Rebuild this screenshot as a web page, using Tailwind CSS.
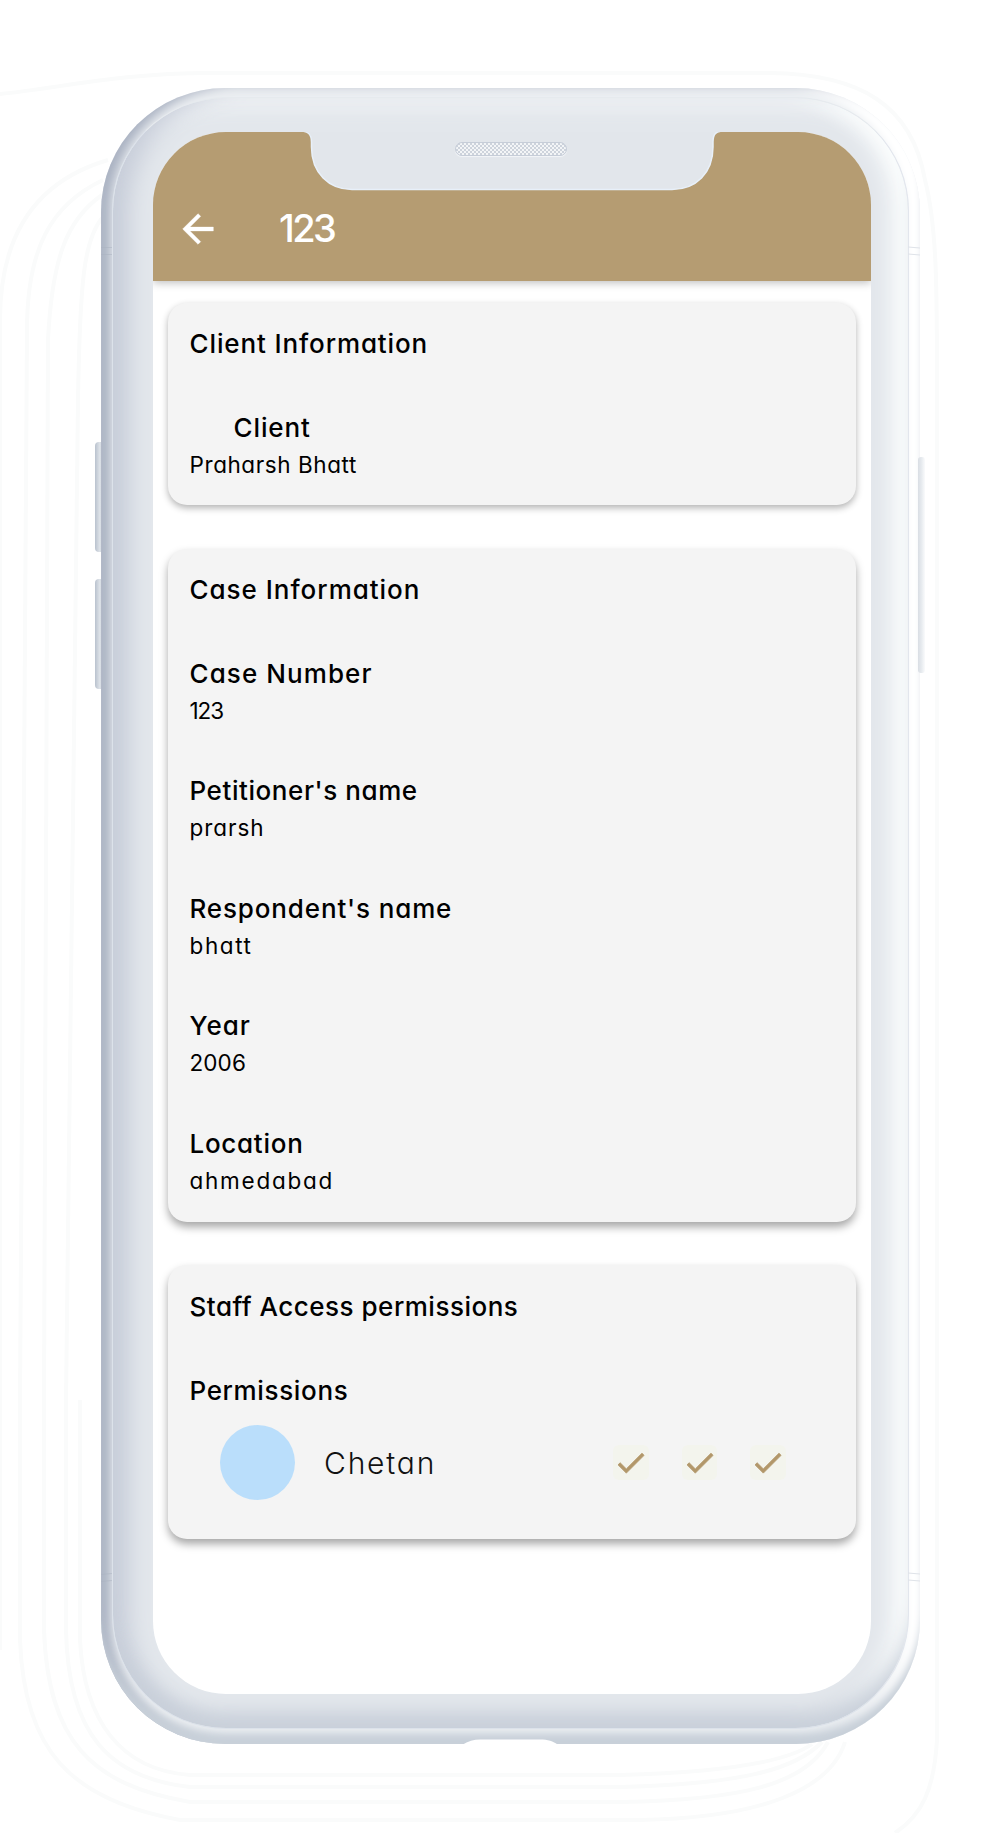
<!DOCTYPE html>
<html lang="en">
<head>
<meta charset="utf-8">
<title>Case details</title>
<script src="https://cdn.jsdelivr.net/npm/@tailwindcss/browser@4"></script>
</head>
<body class="relative h-[1833px] w-[1000px] overflow-hidden bg-white font-['Inter',sans-serif] text-black [font-feature-settings:'cv11']">

<!-- Faint contour lines around the device -->
<svg class="absolute inset-0" width="1000" height="1833" fill="none" stroke="#fafbfb" stroke-width="4">
  <path d="M0 94C60 88 120 73 210 73H770C860 74 912 105 925 180C938 230 937 300 937 420V1740C934 1790 922 1815 895 1833"/>
  <path d="M108 160C40 180 0 230 0 320V1650"/>
  <path d="M103 180C50 205 27 250 27 330L20 1400V1640C24 1750 70 1800 180 1820H640C760 1818 830 1790 845 1742"/>
  <path d="M102 195C66 220 52 260 48 340L44 1400V1630C48 1740 90 1785 190 1802H620C740 1800 805 1785 828 1742"/>
  <path d="M102 218C84 240 80 280 78 400L66 1400V1630C68 1735 110 1778 190 1787H620C740 1784 795 1770 822 1742"/>
  <path d="M80 1400V1640C84 1720 120 1770 190 1775H620C730 1772 790 1760 812 1744"/>
</svg>

<!-- Side buttons -->
<div class="absolute left-[95px] top-[442px] h-[110px] w-[9px] rounded-l-[4px] bg-linear-to-r from-[#b9c2ce] via-[#dce1e7] to-[#cdd3dc]"></div>
<div class="absolute left-[95px] top-[579px] h-[110px] w-[9px] rounded-l-[4px] bg-linear-to-r from-[#b9c2ce] via-[#dce1e7] to-[#cdd3dc]"></div>

<!-- Device frame -->
<div class="absolute left-[101px] top-[88px] h-[1656px] w-[819px] rounded-[124px] bg-[#edf0f3] pb-[15px] pl-[11px] pr-[11px] pt-[9px] shadow-[inset_0_-14px_8px_-3px_#c8d0d9,inset_12px_0_12px_-2px_#a9b1c1,inset_-14px_0_8px_#ffffff]">
  <div class="h-full w-full rounded-[114px] border border-[#dce2ea] border-r-[#e2e6ed] border-t-[#e6eaee] bg-[#e3e7ec] pb-[34px] pl-[40px] pr-[37.5px] pt-[34px] shadow-[inset_0_-24px_18px_-8px_#c9d0da,inset_26px_0_22px_-10px_#c7cdd9,inset_-24px_0_20px_-8px_#fbfdfd,inset_0_20px_16px_-8px_#eef1f4]">

    <!-- Screen -->
    <div class="relative flex h-full w-full flex-col overflow-hidden rounded-[73px] bg-white">
      <header class="relative flex h-[149px] shrink-0 items-start bg-[#b59c72] pl-[22px] pt-[74px] text-white shadow-[0_2px_8px_rgba(0,0,0,0.25)]">
        <svg class="absolute left-[146.500px] top-[-1px]" width="424" height="60" viewBox="0 0 424 60" fill="#e2e6eb" stroke="#e8f0f9" stroke-width="1.5">
          <path d="M0 0C8 0 11.500 3 11.500 11V16C11.500 42 29 58.500 52 58.500H372C396 58.500 413 42 413 16V11C413 3 416 0 424 0Z"/>
        </svg>
        <div class="absolute left-[301.500px] top-[10px] h-[14px] w-[112px] rounded-full border border-[#c6cdd8] bg-[repeating-conic-gradient(#cdd3dc_0_25%,#f3f5f7_0_50%)] bg-[length:4px_4px] shadow-[0_1px_1px_#f4f6f9]"></div>
        <svg class="size-[46px]" viewBox="0 0 24 24" fill="currentColor" stroke="currentColor" stroke-width="0.2"><path d="M20 11H7.830l5.590-5.590L12 4l-8 8 8 8 1.410-1.410L7.830 13H20v-2z"/></svg>
        <h1 class="ml-[58px] h-[46px] text-[38px] font-medium leading-[45px] tracking-[-2.600px]">123</h1>
      </header>

      <main class="flex flex-col px-[14.500px] pt-[22px]">
        <section class="h-[202px] rounded-[19px] bg-[#f4f4f4] pl-[22px] pt-[25px] shadow-[0_3px_7px_rgba(0,0,0,0.3)]">
          <h2 class="text-[26px] font-medium leading-8 tracking-[0.880px]">Client Information</h2>
          <h3 class="ml-[44px] mt-[52px] text-[26px] font-medium leading-8 tracking-[0.900px]">Client</h3>
          <p class="mt-[7px] text-[22.500px] leading-7 tracking-[0.580px]">Praharsh Bhatt</p>
        </section>

        <section class="mt-[43.500px] h-[673px] rounded-[19px] bg-[#f4f4f4] pl-[22px] pt-[25.500px] shadow-[0_5px_9px_rgba(0,0,0,0.35)]">
          <h2 class="text-[26px] font-medium leading-8 tracking-[0.980px]">Case Information</h2>
          <div class="mt-[51.500px] flex flex-col gap-[50.500px]">
            <div>
              <h3 class="text-[26px] font-medium leading-8 tracking-[1.080px]">Case Number</h3>
              <p class="mt-[7px] text-[22.500px] leading-7 tracking-[-1.100px]">123</p>
            </div>
            <div>
              <h3 class="text-[26px] font-medium leading-8 tracking-[0.580px]">Petitioner's name</h3>
              <p class="mt-[7px] text-[22.500px] leading-7 tracking-[0.950px]">prarsh</p>
            </div>
            <div>
              <h3 class="text-[26px] font-medium leading-8 tracking-[0.860px]">Respondent's name</h3>
              <p class="mt-[7px] text-[22.500px] leading-7 tracking-[1.600px]">bhatt</p>
            </div>
            <div>
              <h3 class="text-[26px] font-medium leading-8 tracking-[1.050px]">Year</h3>
              <p class="mt-[7px] text-[22.500px] leading-7 tracking-[0.100px]">2006</p>
            </div>
            <div>
              <h3 class="text-[26px] font-medium leading-8 tracking-[0.720px]">Location</h3>
              <p class="mt-[7px] text-[22.500px] leading-7 tracking-[1.750px]">ahmedabad</p>
            </div>
          </div>
        </section>

        <section class="mt-[43.500px] h-[274px] rounded-[19px] bg-[#f4f4f4] pl-[22px] pt-[25.500px] shadow-[0_5px_9px_rgba(0,0,0,0.35)]">
          <h2 class="text-[26px] font-medium leading-8 tracking-[0.500px]">Staff Access permissions</h2>
          <h3 class="mt-[52px] text-[26px] font-medium leading-8 tracking-[0.650px]">Permissions</h3>
          <div class="mt-[18.500px] flex items-center pl-[30px]">
            <div class="size-[75px] rounded-full bg-[#badefb]"></div>
            <p class="ml-[29.500px] w-[289px] pt-[1px] text-[30px] font-light leading-9 tracking-[1.800px] text-[#111]">Chetan</p>
            <div class="flex gap-[33px] text-[#b2976a]">
              <svg class="size-[35.500px] rounded-[6px] bg-[#f3f4ed]" viewBox="0 0 24 24" fill="currentColor" stroke="currentColor" stroke-width="0.6"><path d="M9 16.170 4.830 12l-1.420 1.410L9 19 21 7l-1.410-1.410z"/></svg>
              <svg class="size-[35.500px] rounded-[6px] bg-[#f3f4ed]" viewBox="0 0 24 24" fill="currentColor" stroke="currentColor" stroke-width="0.6"><path d="M9 16.170 4.830 12l-1.420 1.410L9 19 21 7l-1.410-1.410z"/></svg>
              <svg class="size-[35.500px] rounded-[6px] bg-[#f3f4ed]" viewBox="0 0 24 24" fill="currentColor" stroke="currentColor" stroke-width="0.6"><path d="M9 16.170 4.830 12l-1.420 1.410L9 19 21 7l-1.410-1.410z"/></svg>
            </div>
          </div>
        </section>
      </main>
    </div>
  </div>
</div>

<div class="absolute left-[918px] top-[457px] h-[216px] w-[7px] rounded-[3px] bg-linear-to-r from-[#d9dee4] via-[#e7ebef] to-[#fafbfc]"></div>

<!-- Antenna seams and the bottom cut-out -->
<svg class="absolute inset-0" width="1000" height="1833" fill="none" stroke-width="1">
  <path stroke="#a9b2c0" stroke-opacity=".5" d="M101 247.500h11M101 254.500h11M101 1574.500l11-1M101 1581.500l11-1"/>
  <path stroke="#dfe3e9" d="M908 247l12 1M908 254l12 1M908 1573l12 1M908 1580l12 1"/>
  <path fill="#fff" d="M462 1745C468 1741 474 1739.500 480 1739.500H540C548 1739.500 553 1741 558 1745Z"/>
</svg>
</body>
</html>
